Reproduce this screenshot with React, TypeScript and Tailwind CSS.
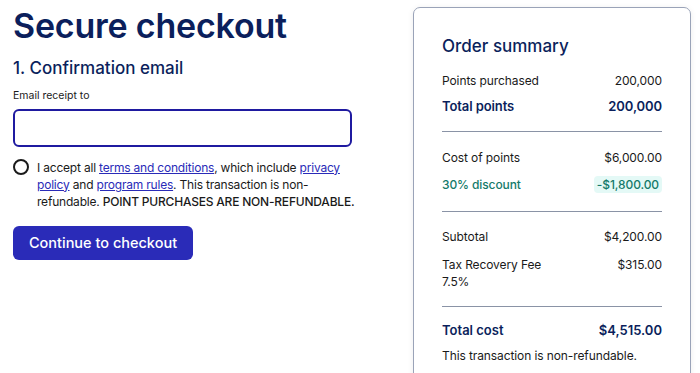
import React from "react";

const navy = "text-[#0b1f5c]";

function Row({ label, value, className = "" }: { label: React.ReactNode; value: React.ReactNode; className?: string }) {
  return (
    <div className={`flex items-start justify-between ${className}`}>
      <div>{label}</div>
      <div>{value}</div>
    </div>
  );
}

export default function App() {
  return (
    <div
      className="flex h-[373px] w-[700px] overflow-hidden bg-white text-[#1a1a1a]"
      style={{ fontFamily: "Inter, 'Noto Sans', sans-serif" }}
    >
      <div className="w-[362px] shrink-0 pl-[13px] pt-[6px]">
        <h1 className={`text-[34px] font-semibold leading-[40px] tracking-[-0.2px] ${navy}`}>Secure checkout</h1>
        <h2 className={`mt-[11px] text-[17px] font-medium leading-[22px] ${navy}`}>1. Confirmation email</h2>
        <label className="mt-[10px] block text-[10.5px] leading-[14px]">Email receipt to</label>
        <input
          className="mt-[6px] block h-[38px] w-[339px] rounded-[6px] border-2 border-[#1f1aa0] px-3 text-[14px] outline-none"
          type="text"
        />
        <div className="mt-[11.5px] flex items-start gap-[8px]">
          <div className="mt-[0.5px] h-[16px] w-[16px] shrink-0 rounded-full border-2 border-[#1a1a1a]" />
          <p className="text-[12px] leading-[17px] tracking-[-0.2px]">
            I accept all{" "}
            <a className="text-[#2a2bb8] underline" href="#">
              terms and conditions
            </a>
            , which include{" "}
            <a className="text-[#2a2bb8] underline" href="#">
              privacy policy
            </a>{" "}
            and{" "}
            <a className="text-[#2a2bb8] underline" href="#">
              program rules
            </a>
            . This transaction is non-refundable. <span className="font-medium">POINT PURCHASES ARE NON-REFUNDABLE.</span>
          </p>
        </div>
        <button className="mt-[16.5px] h-[34px] w-[180px] rounded-[6px] bg-[#2a2bb8] text-[14.5px] font-medium text-white">
          Continue to checkout
        </button>
      </div>

      <div className="ml-[51px] mt-[7px] w-[278px] shrink-0 self-start rounded-[7px] border border-[#9aa3b8] px-[28px] pt-[27px] pb-[20px] shadow-[0_1px_6px_rgba(0,0,0,0.08)]">
        <h3 className={`text-[17px] font-medium leading-[22px] ${navy}`}>Order summary</h3>
        <div className="mt-[14.5px] text-[12px] leading-[17px] tracking-[-0.1px]">
          <Row label="Points purchased" value="200,000" />
          <Row
            className={`mt-[8.5px] text-[13px] font-semibold leading-[18px] ${navy}`}
            label="Total points"
            value="200,000"
          />
        </div>
        <div className="mt-[16px] h-px bg-[#8a93a6]" />
        <div className="mt-[16.5px] text-[12px] leading-[17px] tracking-[-0.1px]">
          <Row label="Cost of points" value="$6,000.00" />
          <Row
            className="mt-[10px] items-center font-medium text-[#157a6a]"
            label="30% discount"
            value={<span className="block rounded-[4px] bg-[#e4f9f6] px-[3px]">-$1,800.00</span>}
          />
        </div>
        <div className="mt-[18px] h-px bg-[#8a93a6]" />
        <div className="mt-[16.5px] text-[12px] leading-[17px] tracking-[-0.1px]">
          <Row label="Subtotal" value="$4,200.00" />
          <Row
            className="mt-[11px]"
            label={
              <>
                Tax Recovery Fee
                <br />
                7.5%
              </>
            }
            value="$315.00"
          />
        </div>
        <div className="mt-[16px] h-px bg-[#8a93a6]" />
        <Row
          className={`mt-[14px] text-[13px] font-semibold leading-[18px] ${navy}`}
          label="Total cost"
          value="$4,515.00"
        />
        <p className="mt-[7.5px] text-[12px] leading-[17px] tracking-[-0.1px]">This transaction is non-refundable.</p>
      </div>
    </div>
  );
}
